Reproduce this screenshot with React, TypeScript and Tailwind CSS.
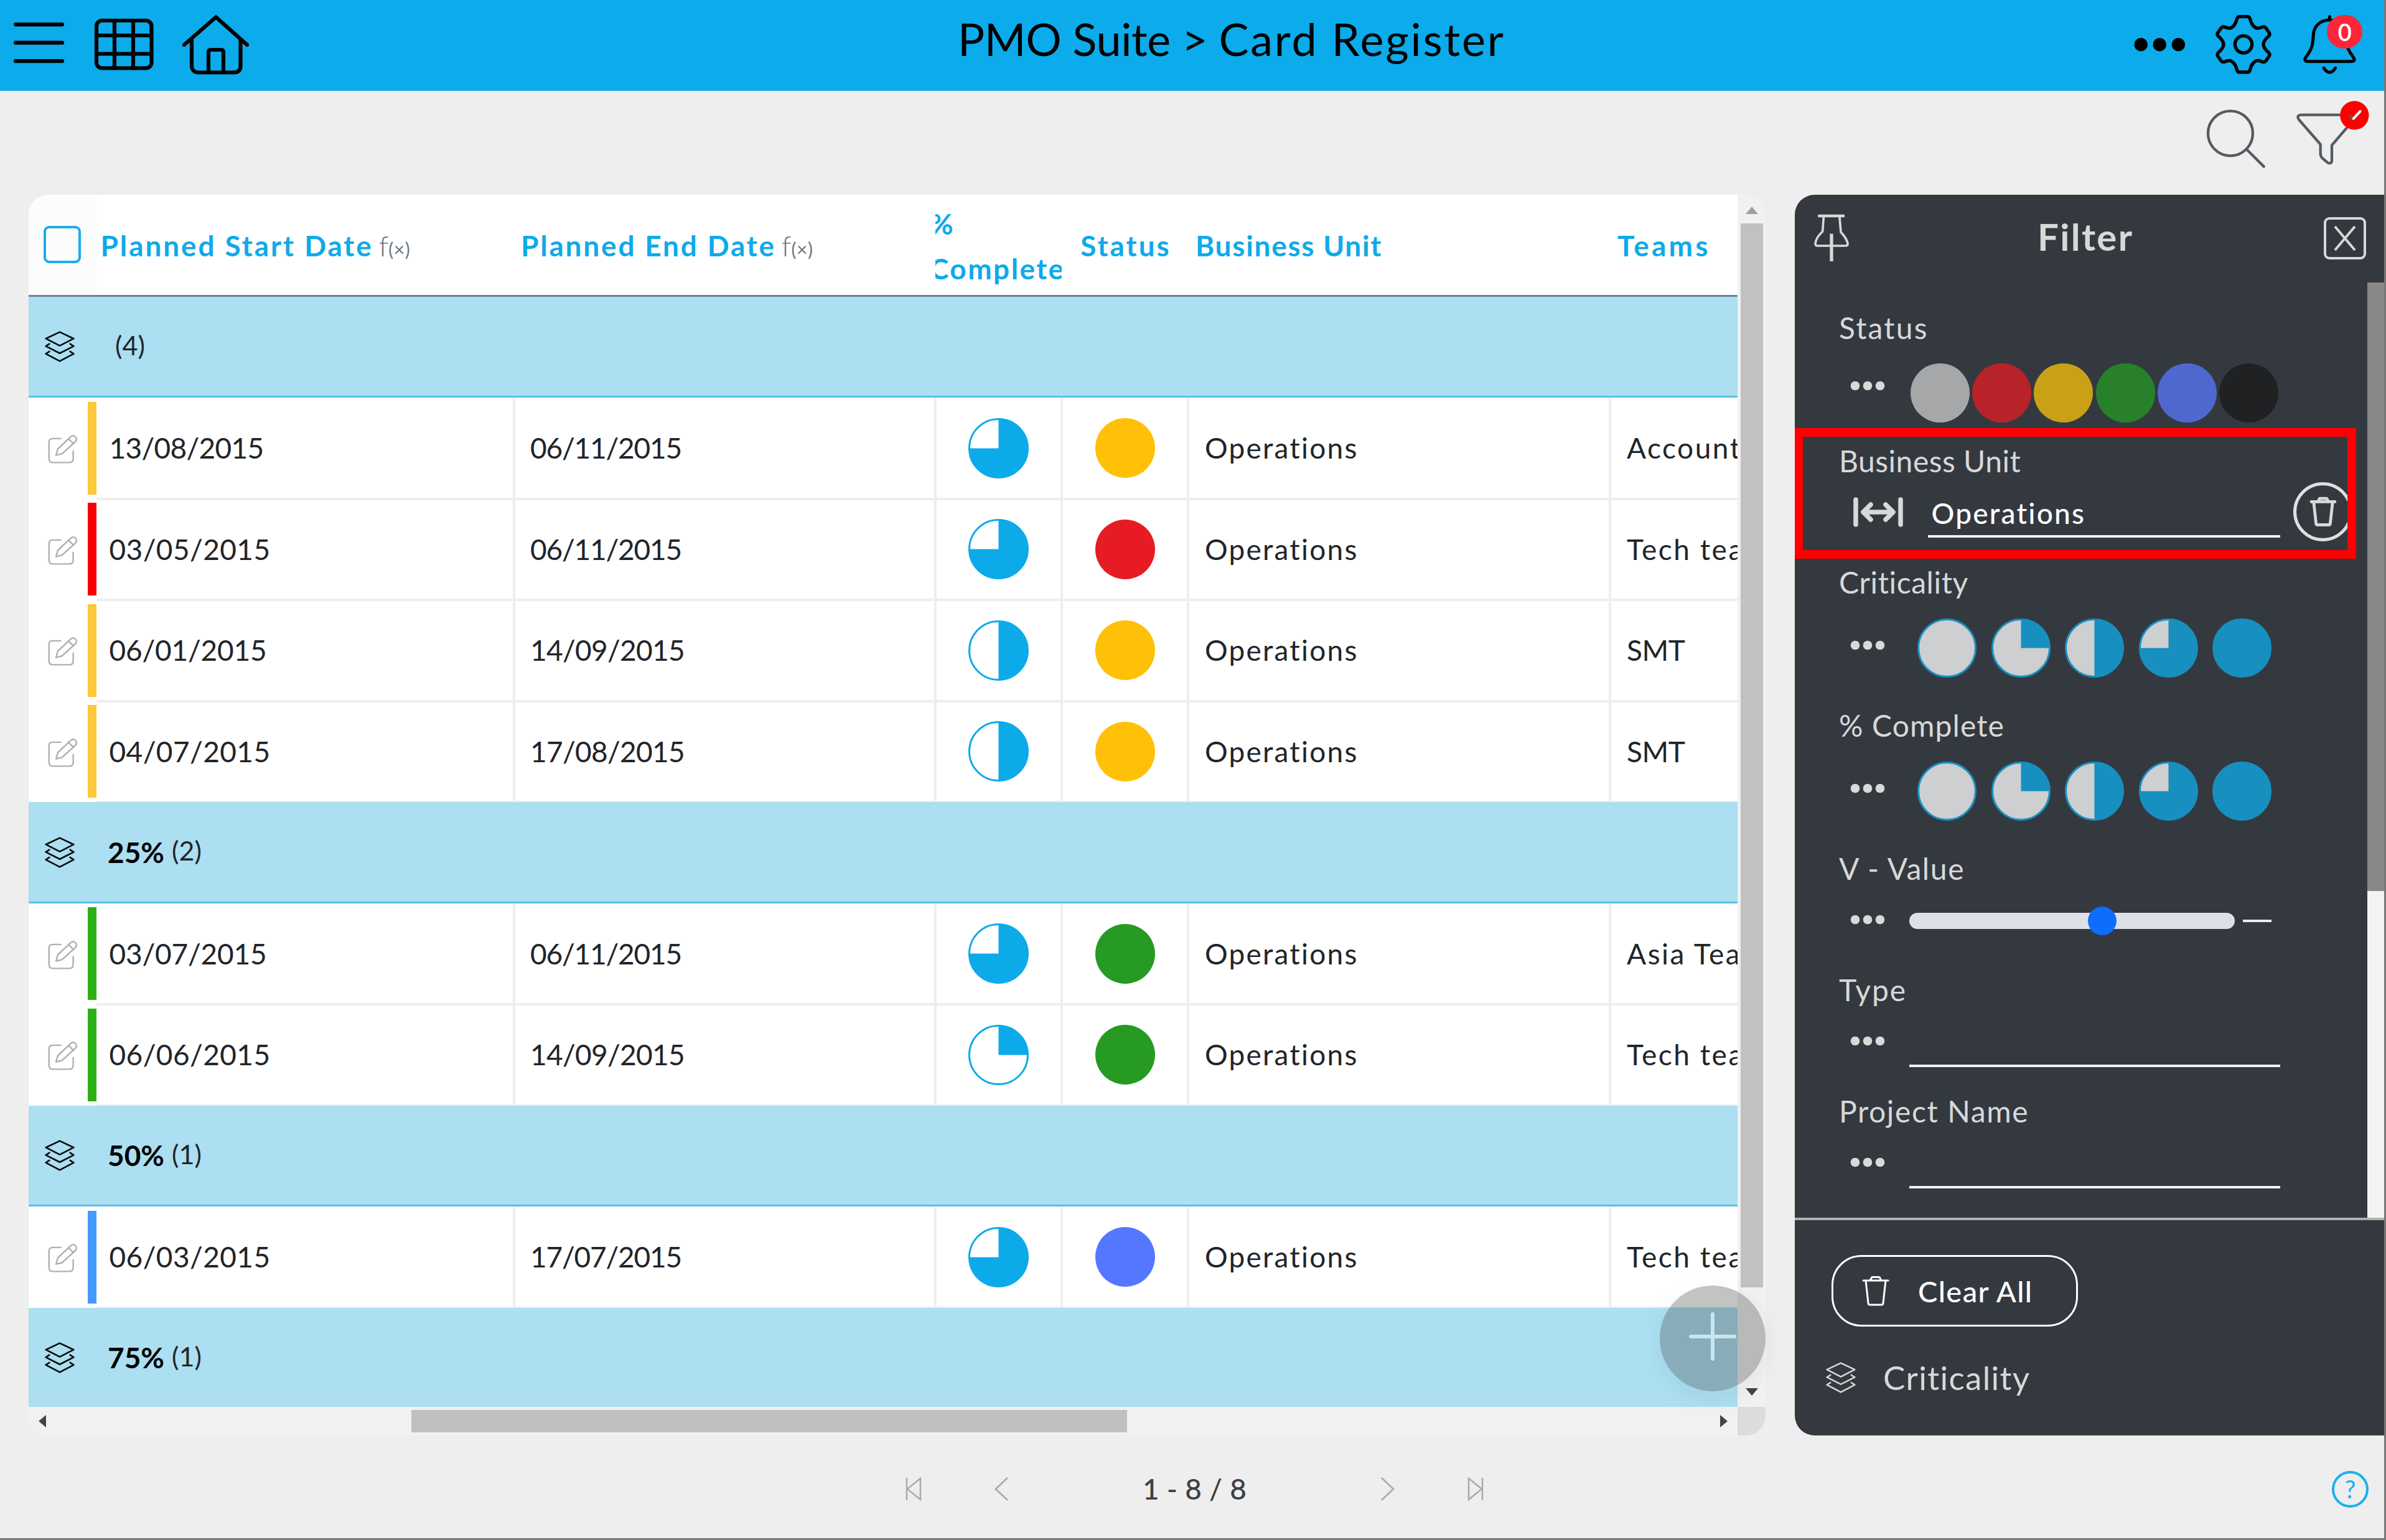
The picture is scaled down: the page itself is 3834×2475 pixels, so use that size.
import type { ReactNode } from 'react';

type Fill = 0 | 25 | 50 | 75 | 100;

type DataRow = {
  kind: 'row';
  start: string;
  startCls: string;
  end: string;
  endCls: string;
  pct: Fill;
  bar: string;
  dot: string;
  team: string;
  first?: boolean;
};
type GroupRow = { kind: 'group'; label: string; count: string };

const YELLOW = { bar: 'bg-[#fdc839]', dot: 'bg-[#ffc107]' };
const RED = { bar: 'bg-[#fb0000]', dot: 'bg-[#e61b23]' };
const GREEN = { bar: 'bg-[#2db015]', dot: 'bg-[#269a22]' };
const BLUE = { bar: 'bg-[#429aff]', dot: 'bg-[#5577ff]' };

const WIDE = 'tracking-[0.4px]';
const MID = 'tracking-[-0.2px]';
const TIGHT = 'tracking-[-0.7px]';
const TIGHTER = 'tracking-[-1.2px]';

const rows: (DataRow | GroupRow)[] = [
  { kind: 'group', label: '', count: '(4)' },
  { kind: 'row', start: '13/08/2015', startCls: TIGHT, end: '06/11/2015', endCls: TIGHTER, pct: 75, ...YELLOW, team: 'Accounts', first: true },
  { kind: 'row', start: '03/05/2015', startCls: WIDE, end: '06/11/2015', endCls: TIGHTER, pct: 75, ...RED, team: 'Tech team' },
  { kind: 'row', start: '06/01/2015', startCls: MID, end: '14/09/2015', endCls: TIGHT, pct: 50, ...YELLOW, team: 'SMT' },
  { kind: 'row', start: '04/07/2015', startCls: WIDE, end: '17/08/2015', endCls: TIGHT, pct: 50, ...YELLOW, team: 'SMT' },
  { kind: 'group', label: '25%', count: '(2)' },
  { kind: 'row', start: '03/07/2015', startCls: MID, end: '06/11/2015', endCls: TIGHTER, pct: 75, ...GREEN, team: 'Asia Team', first: true },
  { kind: 'row', start: '06/06/2015', startCls: WIDE, end: '14/09/2015', endCls: TIGHT, pct: 25, ...GREEN, team: 'Tech team' },
  { kind: 'group', label: '50%', count: '(1)' },
  { kind: 'row', start: '06/03/2015', startCls: WIDE, end: '17/07/2015', endCls: TIGHTER, pct: 75, ...BLUE, team: 'Tech team', first: true },
  { kind: 'group', label: '75%', count: '(1)' },
];

const GRID = 'grid grid-cols-[108.5px_671.5px_677px_203px_203px_678px_678px] w-[3219px]';

const piePaths: Record<Fill, string> = {
  0: '',
  25: 'M48 48V1A47 47 0 0 1 95 48Z',
  50: 'M48 48V1A47 47 0 0 1 48 95Z',
  75: 'M48 48V1A47 47 0 1 1 1 48Z',
  100: 'M48 1A47 47 0 1 1 47.9 1Z',
};

function Pie({ fill, fg, bg, cls }: { fill: Fill; fg: string; bg: string; cls: string }) {
  return (
    <svg viewBox="0 0 96 96" className={cls}>
      <circle cx="48" cy="48" r="46.5" fill={bg} stroke={fg} strokeWidth="3" />
      <path d={piePaths[fill]} fill={fg} />
    </svg>
  );
}

function Layers({ cls, w = 6.5 }: { cls: string; w?: number }) {
  return (
    <svg viewBox="78 520 118 123" className={cls} fill="none" stroke="currentColor" strokeWidth={w} strokeLinejoin="round" strokeLinecap="round">
      <path d="M137 524L192 550L137 578L82 550Z" />
      <path d="M96 571L82 580L137 608L192 580L178 571" />
      <path d="M96 601L82 610L137 639L192 610L178 601" />
    </svg>
  );
}

function EditIcon() {
  return (
    <svg viewBox="92 926 118 116" className="w-[48px] h-[47px] mt-[3px] text-[#b0b0b0]" fill="none" stroke="currentColor" strokeWidth="6" strokeLinejoin="round" strokeLinecap="round">
      <path d="M143 943H111Q96 943 96 958V1023Q96 1038 111 1038H177Q192 1038 192 1023V992" />
      <path d="M124 1009L131 984L183 935Q192 928 201 936Q209 945 201 955L148 1003Z" />
      <path d="M174 944L192 962" />
    </svg>
  );
}

function Trash({ cls, w }: { cls: string; w: number }) {
  return (
    <svg viewBox="0 0 44 50" className={cls} fill="none" stroke="currentColor" strokeWidth={w} strokeLinejoin="round" strokeLinecap="round">
      <path d="M2 8H42M13 8L16 2.5H28L31 8M6 8L10 44Q10 47 13 47H31Q34 47 34 44L38 8" />
    </svg>
  );
}

function Dots({ cls }: { cls: string }) {
  return (
    <svg viewBox="0 0 56 16" className={`w-[56px] h-[16px] shrink-0 text-[#d9d9d9] ${cls}`} fill="currentColor">
      <circle cx="8" cy="8" r="7.3" />
      <circle cx="28" cy="8" r="7.3" />
      <circle cx="48" cy="8" r="7.3" />
    </svg>
  );
}

function Fx() {
  return (
    <span className="ml-[9px] text-[#6b7580] font-light whitespace-nowrap">
      <span className="text-[46px]">f</span>
      <span className="text-[30px] tracking-[0.5px] font-normal">(×)</span>
    </span>
  );
}

function TopBar() {
  return (
    <header className="h-[146px] shrink-0 bg-[#0cabeb] flex items-start text-black">
      <svg viewBox="0 0 420 146" className="w-[420px] h-[146px] shrink-0" fill="none" stroke="currentColor" strokeWidth="6.2" strokeLinecap="round" strokeLinejoin="round">
        <path d="M25 39.3H100M25 68.7H100M25 98.2H100" />
        <rect x="155" y="33" width="88.5" height="76.5" rx="9" />
        <path d="M184 33V109.5M214 33V109.5M155 57H243.5M155 86.5H243.5" />
        <path d="M296 72L347 27.5L397 72M308 63V107Q309 116 319 116.500H376Q386 116 386.500 107V63M335 116V84Q335 80 339 80H355Q359 80 359 84V116" />
      </svg>
      <h1 className="ml-[1119px] mt-[26px] flex-1 text-[72px] leading-none whitespace-nowrap">
        <span className="tracking-[-0.4px]">PMO Suite &gt; </span>
        <span className="tracking-[2.8px]">Card Register</span>
      </h1>
      <div className="flex items-start mr-[30px] shrink-0">
        <svg viewBox="80 0 260 438" className="w-[86.7px] h-[146px]" fill="currentColor">
          <circle cx="119.500" cy="215" r="32" />
          <circle cx="209.500" cy="215" r="32" />
          <circle cx="300" cy="215" r="32" />
        </svg>
        <svg viewBox="340 0 510 438" className="w-[170px] h-[146px]" fill="none" stroke="currentColor" strokeWidth="16" strokeLinejoin="round">
          <path d="M597 80H635Q645 80 648 92Q654 120 672 132Q680 138 692 135L708 130Q718 127 724 135L740 158Q745 166 738 174Q712 196 712 214Q712 232 738 254Q745 262 740 270L724 293Q718 301 708 298L692 293Q680 290 672 296Q654 308 648 336Q645 348 635 348H597Q587 348 584 336Q578 308 560 296Q552 290 540 293L524 298Q514 301 508 293L492 270Q487 262 494 254Q520 232 520 214Q520 196 494 174Q487 166 492 158L508 135Q514 127 524 130L540 135Q552 138 560 132Q578 120 584 92Q587 80 597 80Z" />
          <circle cx="616" cy="214" r="41" />
        </svg>
        <div className="relative">
          <svg viewBox="850 0 353 438" className="w-[117.7px] h-[146px]" fill="none" stroke="currentColor" strokeWidth="15" strokeLinecap="round" strokeLinejoin="round">
            <path d="M1031 80V96C985 98 957 125 953 165C950 215 946 232 932 253L914 280Q908 296 925 296H1136Q1156 296 1148 280L1130 253C1116 232 1112 215 1109 165C1105 125 1077 98 1031 96" />
            <path d="M1003 328Q1031 370 1059 328" />
          </svg>
          <div className="absolute left-[56px] top-[24px] w-[57px] h-[54px] rounded-full bg-[#ff2539] text-white flex items-center justify-center text-[38px] leading-none font-semibold">0</div>
        </div>
      </div>
    </header>
  );
}

function Toolbar() {
  return (
    <div className="h-[167px] shrink-0 flex justify-end items-start pt-[16px] pr-[24px] text-[#555b61]">
      <svg viewBox="436 486 430 340" className="w-[143.300px] h-[113.300px]" fill="none" stroke="currentColor" strokeWidth="13" strokeLinecap="round">
        <circle cx="556" cy="643" r="108" />
        <path d="M637 723L717 803" />
      </svg>
      <svg viewBox="866 486 358 340" className="w-[119.300px] h-[113.300px]" fill="none" stroke="currentColor" strokeWidth="13" strokeLinecap="round" strokeLinejoin="round">
        <path d="M1140 554H894Q870 556 885 578L988 696V742Q989 756 1000 765L1024 785Q1041 793 1043 775V700L1148 578" />
        <circle cx="1152" cy="556" r="69.500" fill="#ff0000" stroke="none" />
        <path d="M1129 559L1144 573" stroke="#6b555b" />
        <path d="M1147 572L1180 537" stroke="#ffffff" strokeWidth="12" />
      </svg>
    </div>
  );
}

function HeaderCell({ children, cls }: { children: ReactNode; cls: string }) {
  return <div className={`flex items-center whitespace-nowrap overflow-hidden pt-[3px] ${cls}`}>{children}</div>;
}

function Cell({ children, first, cls }: { children: ReactNode; first?: boolean; cls: string }) {
  return (
    <div className={`flex items-center whitespace-nowrap border-[2.5px] border-[#eeeeee] ${first ? 'border-t-white' : ''} ${cls}`}>{children}</div>
  );
}

function Register() {
  return (
    <div className="relative w-[2791px] h-[1994px] shrink-0">
      <div className="w-full h-full flex flex-col rounded-[32px] overflow-hidden bg-[#f1f1f1]">
        <div className="flex h-[1948px]">
          <div className="w-[2746px] h-full overflow-hidden bg-white text-[46px] leading-none text-[#212529]">
            <div className={`${GRID} h-[163.5px] border-b-[3px] border-[#6f8294] text-[#0eaaea] font-bold`}>
              <div className="bg-[#fcfcfc] mb-[4px] flex items-center pl-[24px] pt-[4px]">
                <div className="w-[60px] h-[60px] rounded-[9px] border-[4px] border-[#16aeec]" />
              </div>
              <HeaderCell cls="pl-[7px]">
                <span className="tracking-[2.9px]">Planned Start Date</span>
                <Fx />
              </HeaderCell>
              <HeaderCell cls="pl-[11px]">
                <span className="tracking-[2.8px]">Planned End Date</span>
                <Fx />
              </HeaderCell>
              <HeaderCell cls="">
                <div className="-ml-[9px] mt-[3px] leading-[72px] tracking-[2.4px]">
                  %<br />
                  Complete
                </div>
              </HeaderCell>
              <HeaderCell cls="justify-center pl-[3px] tracking-[3px]">Status</HeaderCell>
              <HeaderCell cls="pl-[12px] tracking-[1.7px]">Business Unit</HeaderCell>
              <HeaderCell cls="pl-[12px] tracking-[4.2px]">Teams</HeaderCell>
            </div>
            {rows.map((r, i) =>
              r.kind === 'group' ? (
                <div key={i} className="h-[162.5px] bg-[#abdff1] border-b-[3px] border-[#58c0e7] flex items-center pl-[26px] pt-[2px]">
                  <Layers cls="w-[48px] h-[50px] text-[#0b0b0b]" />
                  <span className="ml-[53px] font-bold text-black">{r.label}</span>
                  <span className="ml-[12px] text-[43px] -mt-[6px]">{r.count}</span>
                </div>
              ) : (
                <div key={i} className={`${GRID} h-[162.5px]`}>
                  <div className="flex items-center pl-[31px]">
                    <EditIcon />
                    <div className={`ml-auto w-[13.5px] h-[149px] ${r.bar}`} />
                  </div>
                  <Cell first={r.first} cls={`border-l-0 pl-[21px] ${r.startCls}`}>{r.start}</Cell>
                  <Cell first={r.first} cls={`pl-[24px] ${r.endCls}`}>{r.end}</Cell>
                  <Cell first={r.first} cls="justify-center">
                    <Pie fill={r.pct} fg="#0daaea" bg="#ffffff" cls="w-[97px] h-[97px]" />
                  </Cell>
                  <Cell first={r.first} cls="justify-center">
                    <div className={`w-[96px] h-[96px] rounded-full ${r.dot}`} />
                  </Cell>
                  <Cell first={r.first} cls="pl-[25px] tracking-[2.2px]">Operations</Cell>
                  <Cell first={r.first} cls={`pl-[25px] ${r.team === 'SMT' ? 'tracking-[-0.5px]' : 'tracking-[2.5px]'}`}>{r.team}</Cell>
                </div>
              ),
            )}
          </div>
          <div className="w-[45px] h-full bg-[#f1f1f1] flex flex-col items-center">
            <svg viewBox="0 0 20 12" className="w-[20px] h-[12px] mt-[19px]"><path d="M0 12L10 0L20 12Z" fill="#a0a0a0" /></svg>
            <div className="w-[36px] h-[1710px] mt-[15px] bg-[#c1c1c1]" />
            <svg viewBox="0 0 20 12" className="w-[20px] h-[12px] mt-[162px]"><path d="M0 0L10 12L20 0Z" fill="#444" /></svg>
          </div>
        </div>
        <div className="flex flex-1">
          <div className="w-[2746px] flex items-center">
            <svg viewBox="0 0 12 20" className="w-[12px] h-[20px] ml-[16px]"><path d="M12 0L0 10L12 20Z" fill="#444" /></svg>
            <div className="w-[1150px] h-[36px] ml-[587px] bg-[#c0c0c0]" />
            <svg viewBox="0 0 12 20" className="w-[12px] h-[20px] ml-auto mr-[16px]"><path d="M0 0L12 10L0 20Z" fill="#444" /></svg>
          </div>
          <div className="flex-1 bg-[#dcdcdc]" />
        </div>
      </div>
      <div className="absolute left-[2621px] top-[1753px] w-[170px] h-[170px] rounded-full bg-[rgba(58,60,62,0.31)] shadow-[0_10px_40px_rgba(0,0,0,0.06)] flex items-center justify-center">
        <svg viewBox="0 0 76 78" className="w-[76px] h-[78px] -mt-[6px] text-[#d2f0fb]" stroke="currentColor" strokeWidth="6" strokeLinecap="round" opacity="0.85">
          <path d="M38 3V75M3 39H73" />
        </svg>
      </div>
    </div>
  );
}

function Field({ label, h, track, children }: { label: string; h: string; track: string; children: ReactNode }) {
  return (
    <div className={`relative ${h}`}>
      <div className={`relative top-px pl-[71px] text-[48px] leading-none ${track}`}>{label}</div>
      <div className="flex items-start">{children}</div>
    </div>
  );
}

const statusColors = ['bg-[#a6a7a9]', 'bg-[#b72329]', 'bg-[#caa016]', 'bg-[#28812a]', 'bg-[#4f68d0]', 'bg-[#202123]'];
const fills: Fill[] = [0, 25, 50, 75, 100];

function PieRow() {
  return (
    <>
      <Dots cls="ml-[89px] mt-[70px]" />
      <div className="ml-[52px] mt-[35px] flex gap-[23.500px]">
        {fills.map((f) => (
          <Pie key={f} fill={f} fg="#178fbf" bg="#cdcfd1" cls="w-[95px] h-[95px]" />
        ))}
      </div>
    </>
  );
}

function FilterPanel() {
  return (
    <aside className="flex-1 h-[1994px] bg-[#343940] text-[#d8d8d8] rounded-l-[32px] flex flex-col overflow-hidden">
      <div className="h-[141px] shrink-0 flex items-start">
        <svg viewBox="100 70 180 235" className="ml-[29px] mt-[30px] w-[60px] h-[78.300px]" fill="none" stroke="currentColor" strokeWidth="13">
          <path d="M125 82H253" />
          <path d="M152 88L147 157Q115 187 112 215Q111 226 122 226H258Q270 226 268 214Q263 190 235 160L229 88" strokeWidth="11" strokeLinejoin="round" />
          <path d="M190 168V301" strokeWidth="16" />
        </svg>
        <div className="ml-[301px] mt-[37px] text-[60px] leading-none font-bold tracking-[2.3px]">Filter</div>
        <svg viewBox="0 0 68 68" className="ml-auto mr-[29px] mt-[36px] w-[68px] h-[68px]" fill="none" stroke="currentColor" strokeWidth="4">
          <rect x="2" y="2" width="64" height="64" rx="7" />
          <path d="M18 15L50 53M50 15L18 53" />
        </svg>
      </div>
      <div className="flex h-[1503px] shrink-0">
        <div className="w-[920px] pt-[48px]">
          <Field label="Status" h="h-[213.5px]" track="tracking-[2.2px]">
            <Dots cls="ml-[89px] mt-[62px]" />
            <div className="ml-[41px] mt-[34px] flex gap-[4.200px]">
              {statusColors.map((c) => (
                <div key={c} className={`w-[95px] h-[95px] rounded-full ${c}`} />
              ))}
            </div>
          </Field>
          <Field label="Business Unit" h="h-[195px]" track="tracking-[0.5px]">
            <svg viewBox="0 0 80 48" className="ml-[94px] mt-[35px] w-[80px] h-[48px]" fill="none" stroke="currentColor" strokeWidth="7.500" strokeLinecap="round" strokeLinejoin="round">
              <path d="M4 4V44M76 4V44M16 24H64M28 12L16 24L28 36M52 12L64 24L52 36" />
            </svg>
            <div className="ml-[39.500px] mt-[38px] w-[566.500px] h-[62.500px] border-b-[4px] border-[#f3f3f3] pl-[6px] text-[46px] leading-none font-medium tracking-[2.2px] text-white">Operations</div>
            <div className="ml-[21px] mt-[11px] w-[95px] h-[95px] rounded-full border-[5px] border-[#e0e0e0] flex items-center justify-center">
              <Trash cls="w-[42px] h-[49px]" w={5} />
            </div>
            <div className="absolute -left-[1px] -top-[27.500px] w-[903px] h-[210px] border-[14px] border-[#ff0000]" />
          </Field>
          <Field label="Criticality" h="h-[230px]" track="tracking-[0.6px]">
            <PieRow />
          </Field>
          <Field label="% Complete" h="h-[230.5px]" track="tracking-[1.1px]">
            <PieRow />
          </Field>
          <Field label="V - Value" h="h-[195px]" track="tracking-[1.6px]">
            <Dots cls="ml-[89px] mt-[51px]" />
            <div className="relative ml-[38.500px] mt-[48px] w-[523.500px] h-[26px] rounded-full bg-[#dde0e6]">
              <div className="absolute left-[287px] -top-[10px] w-[46px] h-[46px] rounded-full bg-[#0d6efd]" />
            </div>
            <div className="ml-[13px] mt-[59px] w-[46px] h-[4px] bg-[#ececec]" />
          </Field>
          <Field label="Type" h="h-[195px]" track="tracking-[2px]">
            <Dots cls="ml-[89px] mt-[51px]" />
            <div className="ml-[38.500px] mt-[37px] w-[596px] h-[64px] border-b-[4px] border-[#f3f3f3]" />
          </Field>
          <Field label="Project Name" h="h-[195px]" track="tracking-[1.6px]">
            <Dots cls="ml-[89px] mt-[51px]" />
            <div className="ml-[38.500px] mt-[37px] w-[596px] h-[64px] border-b-[4px] border-[#f3f3f3]" />
          </Field>
        </div>
        <div className="flex-1 bg-[#f3f3f3]">
          <div className="h-[978px] bg-[#888888]" />
        </div>
      </div>
      <div className="h-[4px] shrink-0 bg-[#b0b0b0]" />
      <div className="pl-[59px] pt-[56px]">
        <button className="w-[396px] h-[115px] rounded-[48px] border-[3px] border-white flex items-center pl-[46px] text-white text-[47px] leading-none font-medium tracking-[1.4px]">
          <Trash cls="w-[44px] h-[50px]" w={3} />
          <span className="ml-[46px] mt-[2px]">Clear All</span>
        </button>
        <div className="mt-[55px] -ml-[9px] flex items-center">
          <Layers cls="w-[48px] h-[50px]" w={6} />
          <span className="ml-[44px] text-[53px] leading-none tracking-[1.3px]">Criticality</span>
        </div>
      </div>
    </aside>
  );
}

function Pager() {
  const icon = 'h-[38px] text-[#a9acae]';
  return (
    <footer className="flex-1 flex items-center pl-[1455px] pr-[25px] pt-[7px] text-[#3a4147]">
      <svg viewBox="0 0 26 38" className={`${icon} w-[26px]`} fill="none" stroke="currentColor" strokeWidth="2.6"><path d="M2 1V37M24 2V36L3 19Z" /></svg>
      <svg viewBox="0 0 22 38" className={`${icon} w-[22px] ml-[117px]`} fill="none" stroke="currentColor" strokeWidth="2.8"><path d="M21 1L2 19L21 37" /></svg>
      <div className="ml-[216px] w-[176px] text-[46px] leading-none whitespace-nowrap font-medium tracking-[0.3px]">1 - 8 / 8</div>
      <svg viewBox="0 0 22 38" className={`${icon} w-[22px] ml-[207px]`} fill="none" stroke="currentColor" strokeWidth="2.8"><path d="M1 1L20 19L1 37" /></svg>
      <svg viewBox="0 0 26 38" className={`${icon} w-[26px] ml-[117px]`} fill="none" stroke="currentColor" strokeWidth="2.6"><path d="M24 1V37M2 2V36L23 19Z" /></svg>
      <div className="ml-auto w-[59px] h-[59px] rounded-full border-[4px] border-[#19b0ec] text-[#19b0ec] flex items-center justify-center text-[40px] leading-none">?</div>
    </footer>
  );
}

export default function App() {
  return (
    <div className="w-[3834px] h-[2475px] overflow-hidden bg-[#eeeeee] font-['Lato','Noto_Sans',sans-serif] border-r-[3px] border-b-[3px] border-[#777777] flex flex-col">
      <TopBar />
      <Toolbar />
      <main className="flex pl-[46px] gap-[47px] shrink-0">
        <Register />
        <FilterPanel />
      </main>
      <Pager />
    </div>
  );
}
